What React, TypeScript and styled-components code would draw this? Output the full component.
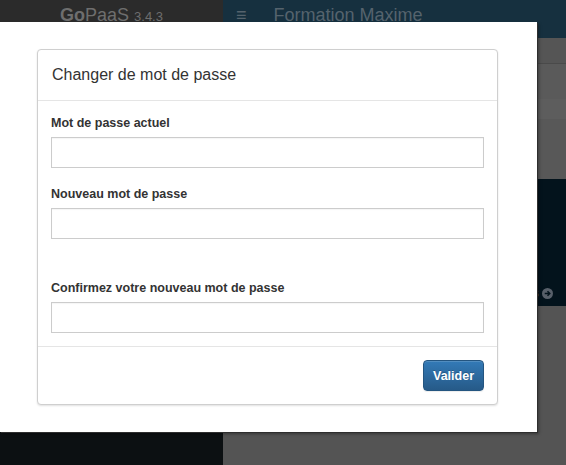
import React from "react";
import styled, { createGlobalStyle } from "styled-components";

const GlobalStyle = createGlobalStyle`
  html, body { margin: 0; padding: 0; }
  body {
    background: #525252;
    font-family: "Liberation Sans", Arial, sans-serif;
    color: #333;
  }
  * { box-sizing: border-box; }
`;

const Page = styled.div`
  position: relative;
  width: 566px;
  height: 465px;
  overflow: hidden;
  display: flex;
  flex-direction: column;
  background: #525252;
`;

const TopBar = styled.header`
  height: 38px;
  display: flex;
  flex-shrink: 0;
`;

const Brand = styled.div`
  width: 223px;
  background: #2b2b2b;
  padding: 4px 0 0 60px;
  color: #6e6e6e;
  font-size: 18px;
  line-height: 22px;
  white-space: nowrap;
  b { font-weight: bold; }
`;

const Version = styled.span`
  font-size: 13px;
  margin-left: 5px;
`;

const NavBar = styled.div`
  flex: 1;
  background: #16303f;
  display: flex;
  align-items: flex-start;
  padding: 4px 0 0 13px;
  color: #55636d;
  font-size: 18px;
  line-height: 22px;
  gap: 27px;
`;

const Burger = styled.span`
  font-size: 18px;
`;

const Main = styled.div`
  flex: 1;
  display: flex;
`;

const Sidebar = styled.aside`
  width: 223px;
  background: #0c1012;
`;

const Content = styled.section`
  flex: 1;
  display: flex;
  flex-direction: column;
`;

const Band = styled.div<{ $h: number; $bg: string; $border?: string }>`
  height: ${(p) => p.$h}px;
  background: ${(p) => p.$bg};
  border-bottom: ${(p) => (p.$border ? `1px solid ${p.$border}` : "none")};
  flex-shrink: 0;
`;

const Hero = styled.div`
  height: 127px;
  background: #03131c;
  display: flex;
  align-items: flex-end;
  justify-content: flex-end;
  padding: 0 13px 7px 0;
  gap: 3px;
  color: #4a5660;
  font-size: 12px;
  font-weight: bold;
  line-height: 12px;
`;

const Rest = styled.div`
  flex: 1;
  background: #545454;
`;

const Modal = styled.div`
  position: absolute;
  top: 22px;
  left: 0;
  width: 537px;
  height: 410px;
  background: #fff;
  box-shadow: 1px 1px 0 #2e2e2e, 2px 2px 3px rgba(0, 0, 0, 0.35);
  padding: 27px 39px 27px 37px;
`;

const Panel = styled.div`
  border: 1px solid #cfcfcf;
  border-radius: 4px;
  box-shadow: 0 1px 2px rgba(0, 0, 0, 0.12);
  background: #fff;
`;

const PanelHeader = styled.div`
  padding: 15px 14px;
  border-bottom: 1px solid #e5e5e5;
  font-size: 16px;
  line-height: 20px;
  color: #333;
`;

const PanelBody = styled.div`
  padding: 13px 13px 13px;
  display: flex;
  flex-direction: column;
`;

const Field = styled.div<{ $gapTop?: number }>`
  display: flex;
  flex-direction: column;
  margin-top: ${(p) => p.$gapTop ?? 0}px;
`;

const Label = styled.label`
  font-size: 12.5px;
  line-height: 18px;
  font-weight: bold;
  color: #333;
  margin-bottom: 5px;
`;

const Input = styled.input`
  height: 31px;
  width: 100%;
  border: 1px solid #cccccc;
  border-radius: 0;
  box-shadow: inset 0 1px 1px rgba(0, 0, 0, 0.04);
  padding: 6px 10px;
  font-family: inherit;
  font-size: 13px;
  outline: none;
`;

const PanelFooter = styled.div`
  border-top: 1px solid #e5e5e5;
  padding: 13px;
  display: flex;
  justify-content: flex-end;
`;

const Button = styled.button`
  height: 31px;
  padding: 0 9px;
  border: 1px solid #245580;
  border-radius: 4px;
  background: linear-gradient(to bottom, #337ab7 0%, #265a88 100%);
  color: #fff;
  font-family: inherit;
  font-weight: bold;
  font-size: 12.5px;
  text-shadow: 0 -1px 0 rgba(0, 0, 0, 0.2);
  box-shadow: inset 0 1px 0 rgba(255, 255, 255, 0.15), 0 1px 1px rgba(0, 0, 0, 0.075);
  cursor: pointer;
`;

const ArrowCircle = () => (
  <svg width="11" height="11" viewBox="0 0 12 12">
    <circle cx="6" cy="6" r="6" fill="#58606a" />
    <path d="M3 6h5M6 3.5 8.5 6 6 8.5" stroke="#03131c" strokeWidth="1.6" fill="none" />
  </svg>
);

export default function App() {
  return (
    <>
      <GlobalStyle />
      <Page>
        <TopBar>
          <Brand>
            <b>Go</b>PaaS<Version>3.4.3</Version>
          </Brand>
          <NavBar>
            <Burger>≡</Burger>
            <span>Formation Maxime</span>
          </NavBar>
        </TopBar>
        <Main>
          <Sidebar />
          <Content>
            <Band $h={26} $bg="#555555" $border="#4a4a4a" />
            <Band $h={35} $bg="#5a5a5a" />
            <Band $h={20} $bg="#5d5d5d" />
            <Band $h={60} $bg="#585858" />
            <Hero>
              <span>Voir les détails</span>
              <ArrowCircle />
            </Hero>
            <Rest />
          </Content>
        </Main>
        <Modal>
          <Panel>
            <PanelHeader>Changer de mot de passe</PanelHeader>
            <PanelBody>
              <Field>
                <Label>Mot de passe actuel</Label>
                <Input type="password" />
              </Field>
              <Field $gapTop={17}>
                <Label>Nouveau mot de passe</Label>
                <Input type="password" />
              </Field>
              <Field $gapTop={40}>
                <Label>Confirmez votre nouveau mot de passe</Label>
                <Input type="password" />
              </Field>
            </PanelBody>
            <PanelFooter>
              <Button>Valider</Button>
            </PanelFooter>
          </Panel>
        </Modal>
      </Page>
    </>
  );
}
